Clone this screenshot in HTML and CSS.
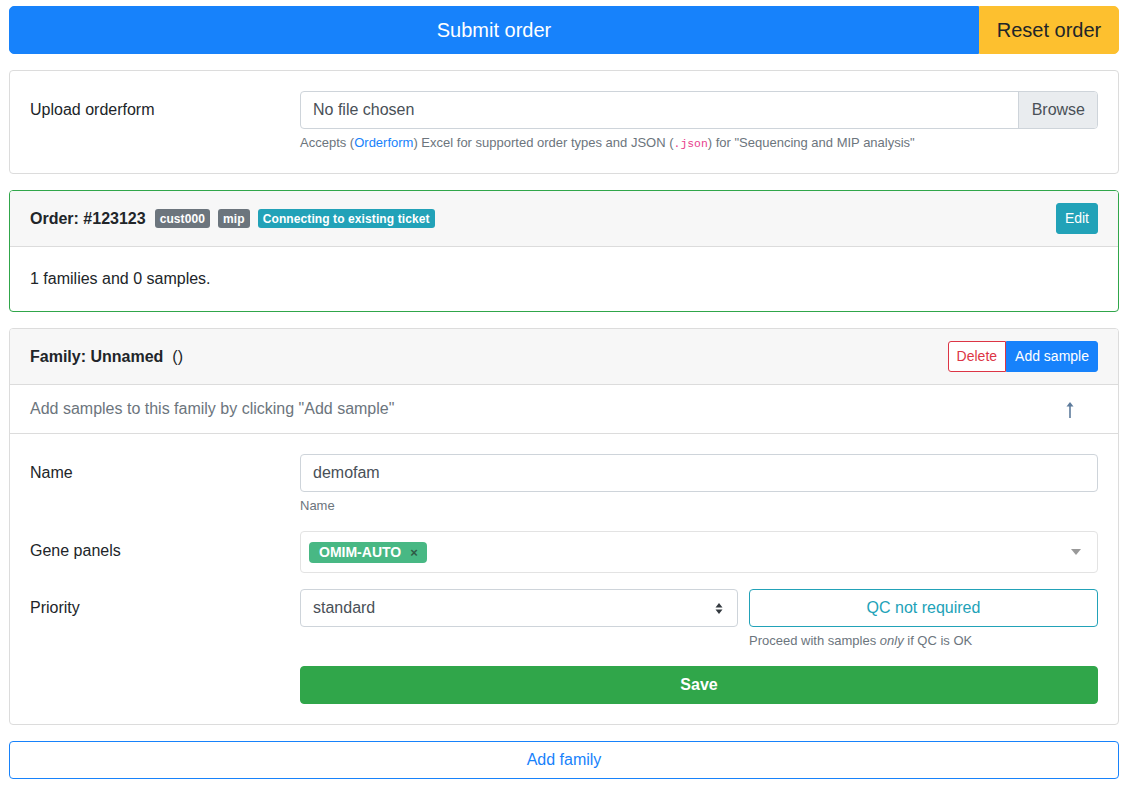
FILE: index.html
```html
<!DOCTYPE html>
<html>
<head>
<meta charset="utf-8">
<link rel="stylesheet" href="styles.css">
</head>
<body>
<div class="page">
  <div class="top-actions">
    <button class="btn-lg btn-submit">Submit order</button>
    <button class="btn-lg btn-reset">Reset order</button>
  </div>

  <div class="card">
    <div class="card-body">
      <div class="form-row last">
        <label class="label">Upload orderform</label>
        <div class="field">
          <div class="file-input">
            <span class="file-text">No file chosen</span>
            <span class="file-browse">Browse</span>
          </div>
          <div class="help upload-help">Accepts (<a class="link">Orderform</a>) Excel for supported order types and JSON (<code>.json</code>) for "Sequencing and MIP analysis"</div>
        </div>
      </div>
    </div>
  </div>

  <div class="card card-success">
    <div class="card-header">
      <div class="header-title">
        <strong>Order: #123123</strong>
        <span class="badge badge-grey">cust000</span>
        <span class="badge badge-grey">mip</span>
        <span class="badge badge-info">Connecting to existing ticket</span>
      </div>
      <button class="btn-sm btn-info">Edit</button>
    </div>
    <div class="card-body">1 families and 0 samples.</div>
  </div>

  <div class="card">
    <div class="card-header">
      <div class="header-title">
        <strong>Family: Unnamed</strong>
        <span class="paren">()</span>
      </div>
      <div class="btn-group">
        <button class="btn-sm btn-outline-danger">Delete</button>
        <button class="btn-sm btn-primary">Add sample</button>
      </div>
    </div>
    <div class="list-row">
      <span class="muted">Add samples to this family by clicking "Add sample"</span>
      <svg class="arrow-up" width="10" height="16" viewBox="0 0 10 16"><path d="M5 1.5 V16" stroke="#5d7b9c" stroke-width="1.6" fill="none"/><path d="M5 0 L8.5 4.5 L1.5 4.5 Z" fill="#5d7b9c"/></svg>
    </div>
    <div class="card-body">
      <div class="form-row">
        <label class="label">Name</label>
        <div class="field">
          <div class="input">demofam</div>
          <div class="help">Name</div>
        </div>
      </div>
      <div class="form-row">
        <label class="label label-tall">Gene panels</label>
        <div class="field">
          <div class="multi-select">
            <span class="tag">OMIM-AUTO <span class="tag-x">×</span></span>
            <svg class="caret" width="10" height="6" viewBox="0 0 10 6"><path d="M0 0 L10 0 L5 6 Z" fill="#999"/></svg>
          </div>
        </div>
      </div>
      <div class="form-row">
        <label class="label">Priority</label>
        <div class="field priority-grid">
          <div class="input select">
            <span>standard</span>
            <svg width="8" height="11" viewBox="0 0 8 11"><path d="M4 0 L7.5 4.5 L0.5 4.5 Z M4 11 L7.5 6.5 L0.5 6.5 Z" fill="#343a40"/></svg>
          </div>
          <div class="qc">
            <button class="btn-outline-info">QC not required</button>
            <div class="help">Proceed with samples <em>only</em> if QC is OK</div>
          </div>
        </div>
      </div>
      <div class="form-row last">
        <span class="label"></span>
        <div class="field">
          <button class="btn-save">Save</button>
        </div>
      </div>
    </div>
  </div>

  <button class="btn-add-family">Add family</button>
</div>
</body>
</html>
```

FILE: styles.css
```css
* { box-sizing: border-box; }
html, body { margin: 0; padding: 0; background: #fff; }
body {
  font-family: "Liberation Sans", Arial, Helvetica, sans-serif;
  font-size: 16px;
  line-height: 1.5;
  color: #212529;
}
button { font-family: inherit; cursor: pointer; }
.page {
  width: 1110px;
  margin-left: 9px;
  padding-top: 6px;
}
.top-actions {
  display: flex;
  margin-bottom: 16px;
}
.btn-lg {
  font-size: 20px;
  line-height: 30px;
  padding: 8px 16px;
  border: 1px solid transparent;
}
.btn-submit {
  flex: 1;
  background: #1782fb;
  border-color: #1782fb;
  color: #fff;
  border-radius: 5px 0 0 5px;
}
.btn-reset {
  width: 140px;
  background: #fdc02f;
  border-color: #fdc02f;
  color: #212529;
  border-radius: 0 5px 5px 0;
}
.card {
  border: 1px solid #dcdcdc;
  border-radius: 4px;
  margin-bottom: 16px;
  background: #fff;
}
.card-success { border-color: #30a64a; }
.card-body { padding: 20px; }
.card-header {
  background: #f7f7f7;
  border-bottom: 1px solid #dcdcdc;
  padding: 12px 20px;
  display: flex;
  align-items: center;
  justify-content: space-between;
  border-radius: 3px 3px 0 0;
}
.header-title { display: flex; align-items: center; gap: 8px; }
.header-title strong { font-weight: 700; margin-right: 1px; }
.badge {
  display: inline-block;
  font-size: 12px;
  font-weight: 700;
  line-height: 1;
  padding: 3.5px 5px;
  border-radius: 3px;
  color: #fff;
  letter-spacing: 0.1px;
}
.badge-grey { background: #6c757d; }
.badge-info { background: #22a2b8; }
.btn-sm {
  font-size: 14px;
  line-height: 21px;
  padding: 4px 8px;
  border: 1px solid transparent;
  border-radius: 3px;
}
.btn-info { background: #22a2b8; border-color: #22a2b8; color: #fff; }
.btn-group { display: flex; }
.btn-outline-danger {
  background: #fff;
  color: #dc3545;
  border-color: #dc3545;
  border-radius: 3px 0 0 3px;
}
.btn-primary {
  background: #1782fb;
  border-color: #1782fb;
  color: #fff;
  border-radius: 0 3px 3px 0;
}
.list-row {
  display: flex;
  justify-content: space-between;
  align-items: center;
  padding: 12px 20px;
  border-bottom: 1px solid #dcdcdc;
}
.muted { color: #6c757d; }
.arrow-up {
  display: block;
  margin-right: 23px;
  margin-top: 1px;
}
.form-row {
  display: grid;
  grid-template-columns: 270px 1fr;
  margin-bottom: 16px;
}
.form-row.last { margin-bottom: 0; }
.label {
  padding-top: 7px;
  line-height: 24px;
}
.label-tall { padding-top: 8px; }
.field { min-width: 0; }
.file-input {
  display: flex;
  height: 38px;
  border: 1px solid #ced4da;
  border-radius: 4px;
  overflow: hidden;
}
.file-text {
  flex: 1;
  padding: 6px 12px;
  color: #495057;
  line-height: 24px;
}
.file-browse {
  background: #e9ecef;
  border-left: 1px solid #ced4da;
  padding: 6px 12px 6px 13px;
  color: #495057;
  line-height: 24px;
}
.help {
  font-size: 13px;
  line-height: 19px;
  color: #6c757d;
  margin-top: 4px;
}
.upload-help { margin-top: 4px; padding-bottom: 1px; }
.link { color: #1782fb; text-decoration: none; }
code {
  font-family: "Liberation Mono", "DejaVu Sans Mono", monospace;
  font-size: 11.4px;
  line-height: 0;
  color: #e83e8c;
}
.input {
  height: 38px;
  border: 1px solid #ced4da;
  border-radius: 4px;
  padding: 6px 12px;
  line-height: 24px;
  color: #495057;
}
.multi-select {
  height: 42px;
  border: 1px solid #e3e3e3;
  border-radius: 4px;
  padding: 8px 8px;
  display: flex;
  align-items: center;
  justify-content: space-between;
}
.tag {
  display: inline-flex;
  align-items: center;
  background: #48b884;
  color: #fff;
  font-size: 14px;
  font-weight: 700;
  line-height: 21px;
  height: 21px;
  padding: 0 9px 0 10px;
  border-radius: 4px;
}
.tag-x {
  color: #2f5a46;
  font-size: 13px;
  font-weight: 700;
  margin-left: 9px;
}
.caret { margin-right: 8px; }
.priority-grid {
  display: grid;
  grid-template-columns: 438px 1fr;
  column-gap: 11px;
}
.select {
  display: flex;
  justify-content: space-between;
  align-items: center;
  padding-right: 14px;
}
.btn-outline-info {
  width: 100%;
  height: 38px;
  background: #fff;
  border: 1px solid #22a2b8;
  border-radius: 4px;
  color: #22a2b8;
  font-size: 16px;
  line-height: 24px;
  padding: 6px 12px;
}
.btn-save {
  width: 100%;
  height: 38px;
  background: #30a64a;
  border: 1px solid #30a64a;
  border-radius: 4px;
  color: #fff;
  font-size: 16px;
  font-weight: 700;
  line-height: 24px;
}
.btn-add-family {
  width: 100%;
  height: 38px;
  background: #fff;
  border: 1px solid #1782fb;
  border-radius: 4px;
  color: #1782fb;
  font-size: 16px;
  line-height: 24px;
  padding: 6px 12px;
}
```
